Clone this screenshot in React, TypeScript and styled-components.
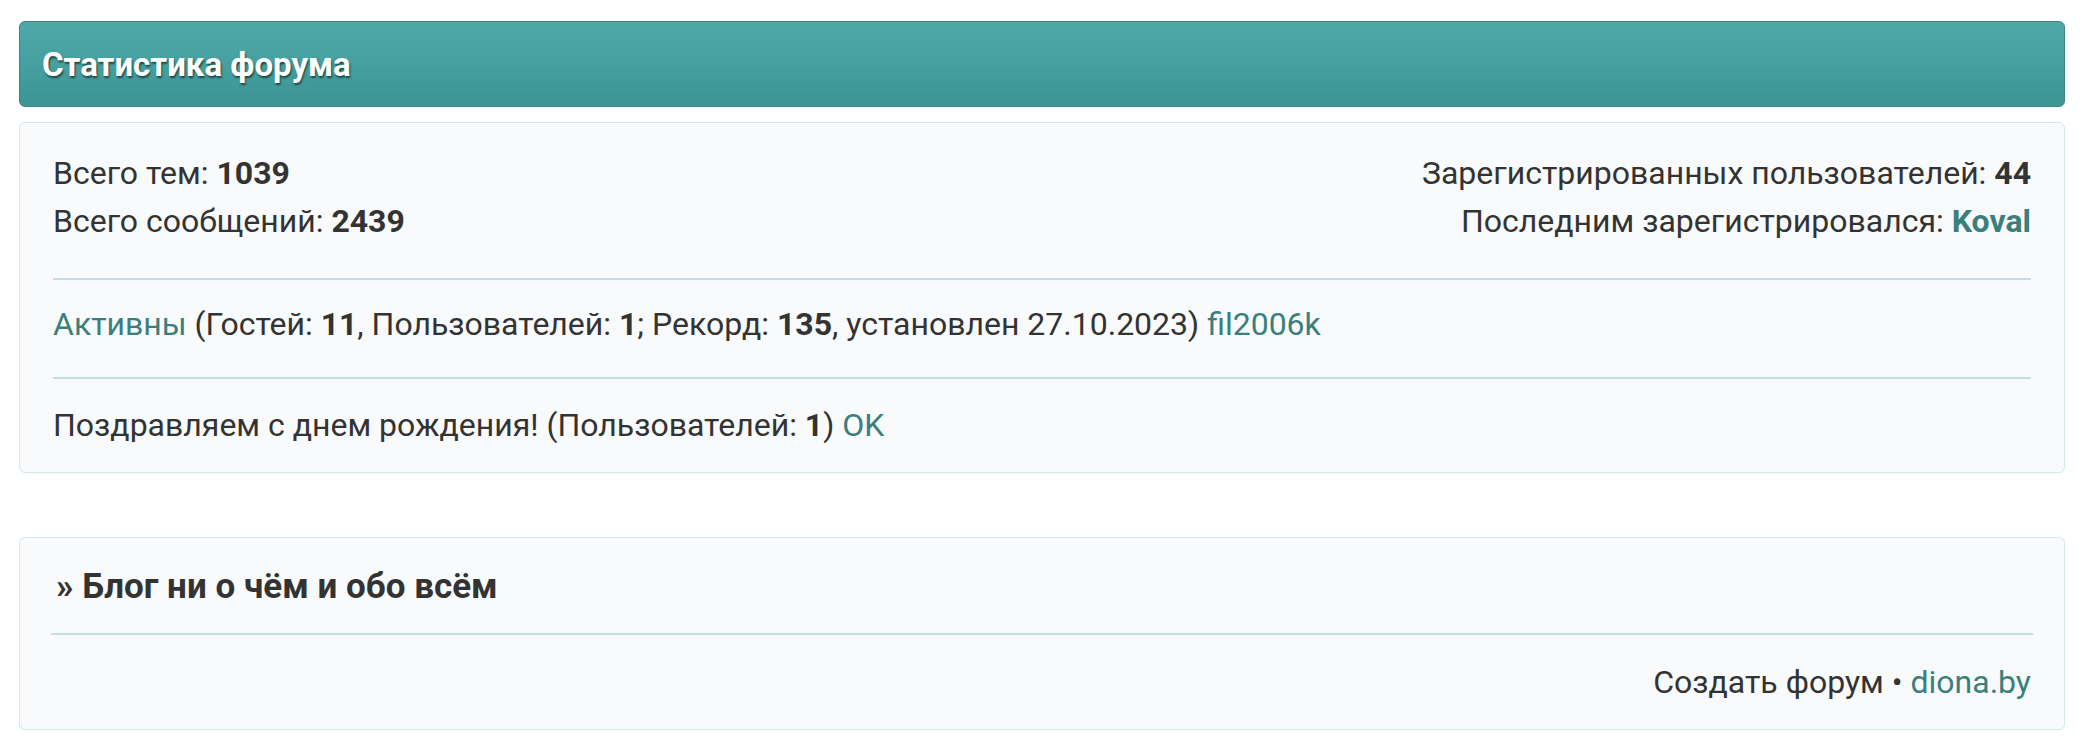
import styled, { createGlobalStyle } from "styled-components";

const GlobalStyle = createGlobalStyle`
  body {
    margin: 0;
    background: #fff;
    font-family: Roboto, "Noto Sans", Arial, sans-serif;
    color: #333;
  }
`;

const Page = styled.div`
  padding: 21px 19px 16px 19px;
  box-sizing: border-box;
`;

const Header = styled.div`
  height: 86px;
  box-sizing: border-box;
  display: flex;
  align-items: center;
  padding: 0 22px;
  border: 1px solid #3d8585;
  border-radius: 6px;
  background: linear-gradient(to bottom, #4ea8a8 0%, #47a1a1 45%, #3c9494 100%);
  color: #fff;
  font-size: 33px;
  font-weight: 700;
  text-shadow: 1px 2px 2px rgba(0, 0, 0, 0.55);
`;

const Panel = styled.div<{ $mt: number; $px: number }>`
  margin-top: ${(p) => p.$mt}px;
  border: 1px solid #cfe8e8;
  border-radius: 6px;
  background: #f8fafc;
  padding: 0 ${(p) => p.$px}px;
  font-size: 32px;
  line-height: 48px;
`;

const Section = styled.div<{ $pt: number; $pb: number }>`
  padding: ${(p) => p.$pt}px 0 ${(p) => p.$pb}px;
  & + & {
    border-top: 2px solid #c6dedd;
  }
`;

const StatsRow = styled.div`
  display: flex;
  justify-content: space-between;
`;

const Col = styled.div<{ $right?: boolean }>`
  text-align: ${(p) => (p.$right ? "right" : "left")};
`;

const Link = styled.a<{ $bold?: boolean }>`
  color: #3a7f7c;
  text-decoration: none;
  font-weight: ${(p) => (p.$bold ? 700 : 400)};
`;

const BlogTitle = styled.div`
  padding: 25px 5px 22px;
  font-size: 35px;
  font-weight: 700;
  line-height: 48px;
  border-bottom: 2px solid #c6dedd;
`;

const Footer = styled.div`
  padding: 23px 2px 23px 0;
  text-align: right;
`;

const App = () => {
  return (
    <Page>
      <GlobalStyle />
      <Header>Статистика форума</Header>
      <Panel $mt={15} $px={33}>
        <Section $pt={26} $pb={33}>
          <StatsRow>
            <Col>
              <div>
                Всего тем: <b>1039</b>
              </div>
              <div>
                Всего сообщений: <b>2439</b>
              </div>
            </Col>
            <Col $right>
              <div>
                Зарегистрированных пользователей: <b>44</b>
              </div>
              <div>
                Последним зарегистрировался: <Link $bold href="#">Koval</Link>
              </div>
            </Col>
          </StatsRow>
        </Section>
        <Section $pt={20} $pb={29}>
          <Link href="#">Активны</Link> (Гостей: <b>11</b>, Пользователей:{" "}
          <b>1</b>; Рекорд: <b>135</b>, установлен 27.10.2023){" "}
          <Link href="#">fil2006k</Link>
        </Section>
        <Section $pt={22} $pb={23}>
          Поздравляем с днем рождения! (Пользователей: <b>1</b>){" "}
          <Link href="#">OK</Link>
        </Section>
      </Panel>
      <Panel $mt={64} $px={31}>
        <BlogTitle>» Блог ни о чём и обо всём</BlogTitle>
        <Footer>
          Создать форум • <Link href="#">diona.by</Link>
        </Footer>
      </Panel>
    </Page>
  );
};

export default App;
